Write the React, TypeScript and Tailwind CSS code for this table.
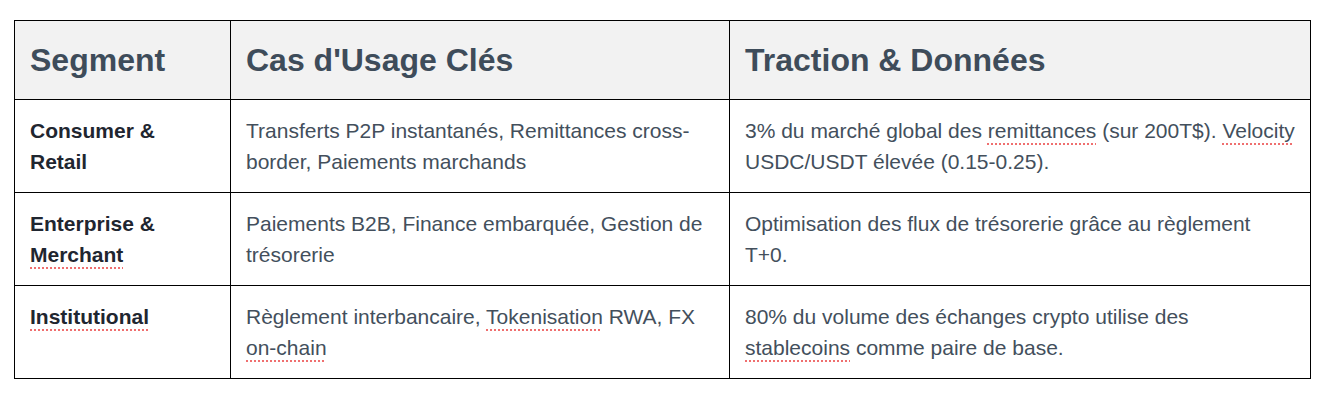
import type { ReactNode } from "react";

const Sp = ({ children }: { children: ReactNode }) => (
  <span className="underline decoration-dotted decoration-[#ef6f6f] decoration-2 underline-offset-[5px]">
    {children}
  </span>
);

const rows: { seg: ReactNode; cas: ReactNode; data: ReactNode }[] = [
  {
    seg: "Consumer & Retail",
    cas: "Transferts P2P instantanés, Remittances cross-border, Paiements marchands",
    data: (
      <>
        3% du marché global des <Sp>remittances</Sp> (sur 200T$). <Sp>Velocity</Sp> USDC/USDT élevée (0.15-0.25).
      </>
    ),
  },
  {
    seg: (
      <>
        Enterprise & <Sp>Merchant</Sp>
      </>
    ),
    cas: "Paiements B2B, Finance embarquée, Gestion de trésorerie",
    data: "Optimisation des flux de trésorerie grâce au règlement T+0.",
  },
  {
    seg: <Sp>Institutional</Sp>,
    cas: (
      <>
        Règlement interbancaire, <Sp>Tokenisation</Sp> RWA, FX <Sp>on-chain</Sp>
      </>
    ),
    data: (
      <>
        80% du volume des échanges crypto utilise des <Sp>stablecoins</Sp> comme paire de base.
      </>
    ),
  },
];

export default function App() {
  return (
    <div className="w-[1340px] h-[402px] bg-white pt-[20px] pl-[14px] font-['Liberation_Sans',Arial,sans-serif]">
      <table className="w-[1296px] table-fixed border-collapse">
        <colgroup>
          <col className="w-[216px]" />
          <col className="w-[499px]" />
          <col className="w-[581px]" />
        </colgroup>
        <thead>
          <tr className="bg-[#f2f2f2]">
            {["Segment", "Cas d'Usage Clés", "Traction & Données"].map((h) => (
              <th
                key={h}
                className="border border-black p-[15px] text-left text-[32px] leading-[48px] font-bold text-[#3e4c5a]"
              >
                {h}
              </th>
            ))}
          </tr>
        </thead>
        <tbody>
          {rows.map((r, i) => (
            <tr key={i}>
              <td className="border border-black p-[15px] align-top text-[21px] leading-[31px] font-bold text-[#1f2630]">
                {r.seg}
              </td>
              <td className="border border-black p-[15px] align-top text-[21px] leading-[31px] text-[#434f5c]">
                {r.cas}
              </td>
              <td className="border border-black p-[15px] align-top text-[21px] leading-[31px] text-[#434f5c]">
                {r.data}
              </td>
            </tr>
          ))}
        </tbody>
      </table>
    </div>
  );
}
